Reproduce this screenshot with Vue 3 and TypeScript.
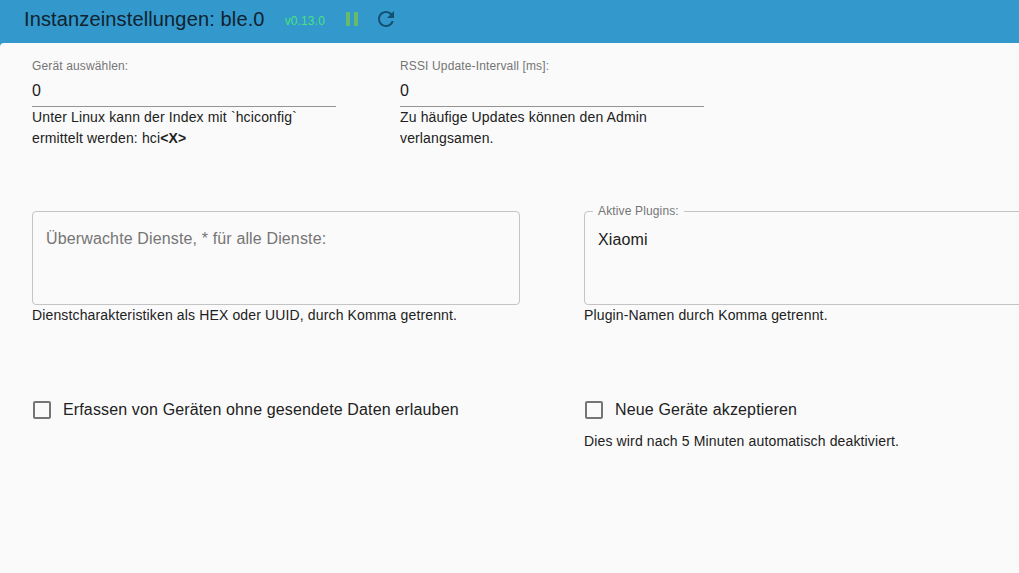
<template>
  <div class="app">
    <header class="toolbar">
      <h1 class="title">Instanzeinstellungen: ble.0</h1>
      <span class="version">v0.13.0</span>
      <svg class="icon pause" viewBox="0 0 24 24" aria-label="Pause">
        <path d="M6 19h4V5H6v14zm8-14v14h4V5h-4z" />
      </svg>
      <svg class="icon refresh" viewBox="0 0 24 24" aria-label="Neu laden">
        <path
          d="M17.65 6.35C16.2 4.9 14.21 4 12 4c-4.42 0-7.99 3.58-7.99 8s3.57 8 7.99 8c3.73 0 6.84-2.55 7.73-6h-2.08c-.82 2.33-3.04 4-5.65 4-3.31 0-6-2.69-6-6s2.69-6 6-6c1.66 0 3.14.69 4.22 1.78L13 11h7V4l-2.35 2.35z"
        />
      </svg>
    </header>

    <main class="panel">
      <section class="row-inputs">
        <div v-for="field in inputFields" :key="field.label" class="field">
          <label class="field-label">{{ field.label }}</label>
          <div class="field-value">{{ field.value }}</div>
          <p class="help">
            {{ field.help }}<b v-if="field.strong">{{ field.strong }}</b>
          </p>
        </div>
      </section>

      <section class="row-areas">
        <div class="area-col">
          <div class="area area-empty">Überwachte Dienste, * für alle Dienste:</div>
          <p class="help">Dienstcharakteristiken als HEX oder UUID, durch Komma getrennt.</p>
        </div>
        <div class="area-col">
          <fieldset class="area area-filled">
            <legend>Aktive Plugins:</legend>
            <div class="area-value">Xiaomi</div>
          </fieldset>
          <p class="help">Plugin-Namen durch Komma getrennt.</p>
        </div>
      </section>

      <section class="row-checks">
        <div class="area-col">
          <div class="check">
            <svg class="check-box" viewBox="0 0 24 24">
              <path :d="boxPath" />
            </svg>
            <span>Erfassen von Geräten ohne gesendete Daten erlauben</span>
          </div>
        </div>
        <div class="area-col">
          <div class="check">
            <svg class="check-box" viewBox="0 0 24 24">
              <path :d="boxPath" />
            </svg>
            <span>Neue Geräte akzeptieren</span>
          </div>
          <p class="help check-help">Dies wird nach 5 Minuten automatisch deaktiviert.</p>
        </div>
      </section>
    </main>
  </div>
</template>

<script setup lang="ts">
interface InputField {
  label: string;
  value: string;
  help: string;
  strong?: string;
}

const boxPath =
  "M19 5v14H5V5h14m0-2H5c-1.1 0-2 .9-2 2v14c0 1.1.9 2 2 2h14c1.1 0 2-.9 2-2V5c0-1.1-.9-2-2-2z";

const inputFields: InputField[] = [
  {
    label: "Gerät auswählen:",
    value: "0",
    help: "Unter Linux kann der Index mit `hciconfig` ermittelt werden: hci",
    strong: "<X>",
  },
  {
    label: "RSSI Update-Intervall [ms]:",
    value: "0",
    help: "Zu häufige Updates können den Admin verlangsamen.",
  },
];
</script>

<style>
html,
body {
  margin: 0;
  overflow: hidden;
}
</style>

<style scoped>
.app {
  width: 1019px;
  height: 573px;
  overflow: hidden;
  display: flex;
  flex-direction: column;
  background: #3399cc;
  font-family: "Liberation Sans", Arial, sans-serif;
  letter-spacing: 0.14px;
  color: #212121;
}

/* Toolbar */
.toolbar {
  height: 43px;
  flex-shrink: 0;
  display: flex;
  align-items: center;
  padding: 0 0 6px 24px;
  box-sizing: border-box;
}

.title {
  margin: 0;
  font-size: 20px;
  font-weight: 400;
  line-height: 24px;
  color: #10222e;
}

.version {
  margin-left: 20px;
  width: 41px;
  font-size: 12px;
  color: #4ae27c;
  padding-top: 4px;
}

.icon {
  width: 24px;
  height: 24px;
  flex-shrink: 0;
}

.pause {
  margin-left: 14px;
  fill: #66bb6a;
}

.refresh {
  margin-left: 10px;
  fill: #14506f;
}

/* Content */
.panel {
  flex: 1;
  background: #fafafa;
  border-top-left-radius: 4px;
  padding: 16px 0 0 32px;
}

.row-inputs {
  display: flex;
  gap: 64px;
}

.field {
  width: 304px;
}

.field-label {
  display: block;
  font-size: 12px;
  line-height: 14px;
  color: #757575;
}

.field-value {
  margin-top: 2px;
  height: 32px;
  box-sizing: border-box;
  font-size: 16px;
  line-height: 31px;
  border-bottom: 1px solid #949494;
}

.help {
  margin: 0;
  font-size: 14px;
  line-height: 21px;
  color: #212121;
}

.row-areas {
  margin-top: 62px;
  display: flex;
  gap: 64px;
}

.area-col {
  width: 488px;
  flex-shrink: 0;
}

.area {
  box-sizing: border-box;
  width: 488px;
  height: 94px;
  margin: 0;
  border: 1px solid #c4c4c4;
  border-radius: 4px;
  font-size: 16px;
}

.area-empty {
  padding: 17px 13px;
  line-height: 20px;
  color: #757575;
}

/* legend sits on the top border, so the box starts 7px higher */
.area-filled {
  height: 101px;
  margin-top: -7px;
  padding: 0 8px;
  min-width: 0;
}

.area-filled legend {
  padding: 0 5px;
  font-size: 12px;
  line-height: 14px;
  color: #757575;
}

.area-value {
  margin-top: 12px;
  padding: 0 5px;
  line-height: 20px;
}

.row-checks {
  margin-top: 72px;
  display: flex;
  gap: 64px;
}

.check {
  display: flex;
  align-items: center;
  gap: 9px;
  margin-left: -2px;
  height: 24px;
  font-size: 16px;
}

.check-box {
  width: 24px;
  height: 24px;
  fill: #757575;
  flex-shrink: 0;
}

.check-help {
  margin-top: 9px;
}
</style>
